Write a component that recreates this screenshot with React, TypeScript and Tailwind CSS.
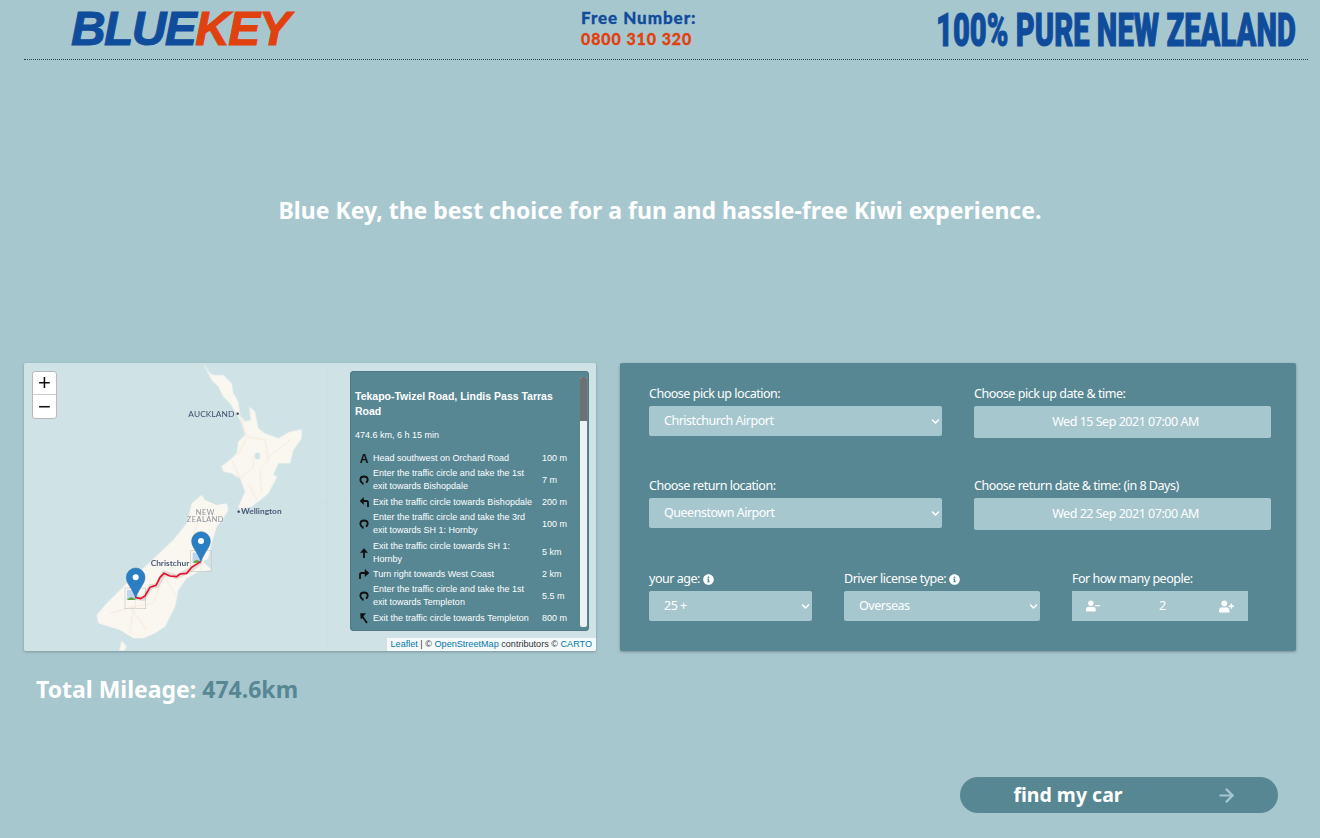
import { ArrowRight } from "lucide-react";
import { FaChevronDown, FaInfoCircle, FaUserMinus, FaUserPlus } from "react-icons/fa";

const ui = "font-['Noto_Sans',sans-serif]";

const steps = [
  { icon: "a", text: "Head southwest on Orchard Road", dist: "100 m" },
  { icon: "round", text: "Enter the traffic circle and take the 1st exit towards Bishopdale", dist: "7 m" },
  { icon: "left", text: "Exit the traffic circle towards Bishopdale", dist: "200 m" },
  { icon: "round", text: "Enter the traffic circle and take the 3rd exit towards SH 1: Hornby", dist: "100 m" },
  { icon: "up", text: "Exit the traffic circle towards SH 1: Hornby", dist: "5 km" },
  { icon: "right", text: "Turn right towards West Coast", dist: "2 km" },
  { icon: "round", text: "Enter the traffic circle and take the 1st exit towards Templeton", dist: "5.5 m" },
  { icon: "sharp", text: "Exit the traffic circle towards Templeton", dist: "800 m" },
];

const StepIcon = ({ type }: { type: string }) => {
  if (type === "a") return <span className="text-[12px] leading-none font-bold text-[#111]">A</span>;
  return (
    <svg width="12" height="12" viewBox="0 0 12 12" fill="none" stroke="#111" strokeWidth="1.8">
      {type === "round" && <path d="M5 10.5 L4.5 9 C1.5 7.5 1.5 2.5 6 2.5 C10.5 2.5 10.5 7 8 8.5" />}
      {type === "left" && (
        <>
          <path d="M10 11 V6.5 C10 5.5 9.5 5 8.5 5 H3" />
          <path d="M5.5 1.5 L2 5 L5.5 8.5 Z" fill="#111" strokeWidth="0.5" />
        </>
      )}
      {type === "up" && (
        <>
          <path d="M6 11 V4" />
          <path d="M2.5 5.5 L6 1.5 L9.5 5.5 Z" fill="#111" strokeWidth="0.5" />
        </>
      )}
      {type === "right" && (
        <>
          <path d="M2 11 V6.5 C2 5.5 2.5 5 3.5 5 H9" />
          <path d="M7 1.5 L11 5 L7 8.5 Z" fill="#111" strokeWidth="0.5" />
        </>
      )}
      {type === "sharp" && (
        <>
          <path d="M9 11 L4 4" />
          <path d="M2.5 1.5 H7.5 L3 7 Z" fill="#111" strokeWidth="0.5" />
        </>
      )}
    </svg>
  );
};

const Pin = ({ x, y }: { x: number; y: number }) => (
  <g transform={`translate(${x} ${y})`}>
    <path d="M0 0 C-10 -30 -28 -42 -28 -62 A28 28 0 0 1 28 -62 C28 -42 10 -30 0 0 Z" fill="#2a7fc4" stroke="#25689f" strokeWidth="1.5" />
    <circle cx="0" cy="-62" r="9" fill="#fff" />
  </g>
);

const BrokenImage = ({ x, y }: { x: number; y: number }) => (
  <g>
    <rect x={x} y={y} width="62" height="62" fill="none" stroke="#c8c8c4" strokeWidth="2" />
    <path d={`M${x + 31} ${y} V${y + 62} M${x} ${y + 31} H${x + 62}`} stroke="#dcdcd8" strokeWidth="1.5" />
    <rect x={x + 6} y={y + 6} width="26" height="30" fill="#bcd4ee" />
    <path d={`M${x + 6} ${y + 36} Q${x + 18} ${y + 20} ${x + 32} ${y + 36} Z`} fill="#58a33c" />
  </g>
);

const MapArt = () => (
  <svg viewBox="12 9 1716 864" className="block h-full w-full">
    <defs>
      <filter id="soft">
        <feGaussianBlur stdDeviation="1.6" />
      </filter>
    </defs>
    <rect x="12" y="9" width="1716" height="864" fill="#cfe3e6" />
    <path d="M348 9 V873 M922 9 V873 M12 430 H1728" stroke="#c8dde0" strokeWidth="1.5" fill="none" />
    <g filter="url(#soft)">
      <g transform="translate(510 0)">
        <path
          d="M40 10 L60 40 L70 45 L100 45 L125 70 L130 100 L145 125 L150 165 L165 185 L182 180 L178 140 L195 155 L205 205 L225 220 L265 235 L300 215 L335 208 L335 235 L310 270 L300 310 L265 310 L250 345 L262 350 L235 400 L205 425 L185 440 L165 445 L150 450 L145 440 L165 395 L150 355 L125 340 L100 335 L95 318 L125 295 L140 280 L145 245 L165 225 L155 190 L145 170 L120 130 L100 110 L85 80 L65 60 Z"
          fill="#faf7f0"
        />
        <path
          d="M150 165 L170 230 L145 285 M170 230 L225 240 L235 300 L210 330 L215 400 M300 240 L230 295 M125 300 L150 355 L190 320 L190 290 M175 370 L200 420"
          stroke="#f4e6cb"
          strokeWidth="2"
          fill="none"
        />
        <ellipse cx="202" cy="288" rx="8" ry="10" fill="#cfe3e6" />
      </g>
      <g transform="translate(210 390)">
        <path
          d="M335 15 L345 30 L380 45 L410 40 L415 60 L400 85 L380 110 L365 160 L355 205 L340 215 L365 240 L325 245 L290 265 L265 300 L255 350 L225 410 L195 430 L160 445 L130 445 L90 420 L25 400 L20 375 L50 340 L100 290 L170 225 L250 150 L290 100 L305 40 Z"
          fill="#faf7f0"
        />
        <path
          d="M210 290 L190 340 L130 350 L120 430 M130 350 L60 370 M230 270 L260 320 M340 60 L310 130 M120 350 L170 420"
          stroke="#f4e6cb"
          strokeWidth="2"
          fill="none"
        />
      </g>
      <path d="M298 872 L305 842 L320 860 L312 872 Z" fill="#faf7f0" />
    </g>
    <circle cx="653" cy="161" r="3.5" fill="#2d3b5a" />
    <text x="505" y="171" fontSize="25" letterSpacing="0.3" fill="#3f4a6b" fontFamily="Lato, sans-serif">AUCKLAND</text>
    <circle cx="656" cy="455" r="3.5" fill="#2d3b5a" />
    <text x="663" y="463" fontSize="25" fontWeight="700" fill="#4a5a78" fontFamily="Lato, sans-serif">Wellington</text>
    <text x="556" y="465" fontSize="22" letterSpacing="1.5" textAnchor="middle" fill="#8a8f9b" fontFamily="Lato, sans-serif">NEW</text>
    <text x="556" y="487" fontSize="22" letterSpacing="1.5" textAnchor="middle" fill="#8a8f9b" fontFamily="Lato, sans-serif">ZEALAND</text>
    <text x="392" y="618" fontSize="25" fontWeight="700" fill="#4a5a78" fontFamily="Lato, sans-serif">Christchur</text>
    <BrokenImage x={512} y={572} />
    <BrokenImage x={315} y={684} />
    <path d="M345 712 L370 716 L392 680 L412 676 L432 640 L470 650 L510 630 L542 605" fill="none" stroke="#8a8a85" strokeOpacity="0.25" strokeWidth="14" />
    <path
      d="M345 712 L362 716 L375 708 L390 682 L408 676 L420 652 L432 640 L450 648 L470 650 L480 642 L500 640 L515 622 L542 605"
      fill="none"
      stroke="#e8102c"
      strokeWidth="5"
    />
    <Pin x={543} y={605} />
    <Pin x={347} y={714} />
  </svg>
);

const RoutePanel = () => (
  <div className="absolute top-2 right-[7px] h-[260px] w-[239px] overflow-hidden rounded-[3px] border border-[#4d7a85] bg-[#578793] font-['Liberation_Sans',sans-serif] text-white">
    <div className="h-full w-[230px] overflow-hidden pt-[17px] pl-[4px]">
      <h2 className="w-[205px] text-[10.5px] leading-[15px] font-bold">Tekapo-Twizel Road, Lindis Pass Tarras Road</h2>
      <p className="mt-[10px] text-[9px] leading-[12px]">474.6 km, 6 h 15 min</p>
      <div className="mt-[11px] flex flex-col gap-[2.4px]">
        {steps.map((s) => (
          <div key={s.text} className="flex items-center text-[9px] leading-[13px]">
            <span className="flex w-[18px] shrink-0 justify-center">
              <StepIcon type={s.icon} />
            </span>
            <span className="mr-[5px] w-[164px] shrink-0">{s.text}</span>
            <span>{s.dist}</span>
          </div>
        ))}
      </div>
    </div>
    <div className="absolute top-[5px] right-[1px] h-[250px] w-[7px] rounded-[2px] bg-[#eef1f1]">
      <div className="h-[44px] w-full rounded-t-[2px] bg-[#6f7073]" />
    </div>
  </div>
);

const Field = ({ label, info, children }: { label: string; info?: boolean; children: React.ReactNode }) => (
  <div>
    <div className="flex h-[23px] items-center gap-[3px] text-[12.5px] tracking-[-0.48px] text-white">
      {label}
      {info && <FaInfoCircle size={11} className="text-white" />}
    </div>
    {children}
  </div>
);

const Select = ({ value, width }: { value: string; width: string }) => (
  <div className={`relative h-[30px] ${width}`}>
    <select
      defaultValue={value}
      className="h-full w-full appearance-none rounded-[2px] bg-[#a7c7cf] pl-[15px] text-[12.5px] tracking-[-0.48px] text-white outline-none"
    >
      <option>{value}</option>
    </select>
    <FaChevronDown size={9} className="pointer-events-none absolute top-[11px] right-[2px] text-white" />
  </div>
);

const DateBox = ({ value }: { value: string }) => (
  <div className="flex h-[32px] w-[297px] items-center justify-center rounded-[2px] bg-[#a7c7cf] pl-[6px] text-[12.5px] tracking-[-0.48px] text-white">
    {value}
  </div>
);

export default function App() {
  return (
    <div className={`h-[838px] overflow-hidden bg-[#a7c7cf] ${ui}`}>
      <header className="mr-3 ml-6 flex h-[60px] items-center border-b border-dotted border-[#23424b] pr-3 pl-[47px]">
        <div className="w-[223px] -translate-y-[1px] font-['Liberation_Sans',sans-serif] text-[48px] leading-none font-bold tracking-[-1.6px] whitespace-nowrap italic [-webkit-text-stroke:1px_currentColor]">
          <span className="text-[#0f4c9b]">BLUE</span>
          <span className="text-[#e0410f]">KEY</span>
        </div>
        <div className="ml-[287px] -translate-y-[2px] font-['Lato',sans-serif] leading-[21px] font-black [-webkit-text-stroke:0.3px_currentColor]">
          <p className="text-[17px] tracking-[0.95px] text-[#0f4c9b]">Free Number:</p>
          <p className="text-[16px] tracking-[0.9px] text-[#e0410f]">0800 310 320</p>
        </div>
        <div className="ml-auto w-[360px]">
          <div className="origin-left scale-x-[0.635] font-['Roboto',sans-serif] text-[46px] leading-none font-black whitespace-nowrap text-[#0f4c9b] [-webkit-text-stroke:1px_#0f4c9b]">
            100% PURE NEW ZEALAND
          </div>
        </div>
      </header>

      <h1 className="mt-[134px] text-center text-[23px] leading-8 font-bold text-white">
        Blue Key, the best choice for a fun and hassle-free Kiwi experience.
      </h1>

      <section className="mt-[137px] flex gap-6 pl-6">
        <div className="w-[572px]">
          <div className="relative h-[288px] overflow-hidden rounded-[2px] shadow-[0_1px_3px_rgba(0,0,0,0.25)]">
            <MapArt />
            <div className="absolute top-2 left-2 flex w-[25px] flex-col overflow-hidden rounded-[3px] border border-[#b9b9b9] bg-white font-['Liberation_Sans',sans-serif] text-[#111]">
              <span className="flex h-[23px] items-center justify-center border-b border-[#ccc] text-[22px] leading-none">+</span>
              <span className="flex h-[23px] items-center justify-center text-[22px] leading-none">−</span>
            </div>
            <RoutePanel />
            <div className="absolute right-0 bottom-0 bg-white/80 px-[4px] font-['Liberation_Sans',sans-serif] text-[9.1px] leading-[13px] text-[#333]">
              <span className="text-[#0078a8]">Leaflet</span> | © <span className="text-[#0078a8]">OpenStreetMap</span> contributors © <span className="text-[#0078a8]">CARTO</span>
            </div>
          </div>
          <p className="mt-[22px] pl-3 text-[23px] leading-8 font-bold text-white">
            Total Mileage: <span className="text-[#578793]">474.6km</span>
          </p>
        </div>

        <form className="h-[288px] w-[676px] rounded-[2px] bg-[#578793] pt-5 pl-[29px] shadow-[0_1px_3px_rgba(0,0,0,0.3)]">
          <div className="flex gap-8">
            <Field label="Choose pick up location:"><Select value="Christchurch Airport" width="w-[293px]" /></Field>
            <Field label="Choose pick up date & time:"><DateBox value="Wed 15 Sep 2021 07:00 AM" /></Field>
          </div>
          <div className="mt-[37px] flex gap-8">
            <Field label="Choose return location:"><Select value="Queenstown Airport" width="w-[293px]" /></Field>
            <Field label="Choose return date & time: (in 8 Days)"><DateBox value="Wed 22 Sep 2021 07:00 AM" /></Field>
          </div>
          <div className="mt-[38px] flex gap-8">
            <Field label="your age:" info><Select value="25 +" width="w-[163px]" /></Field>
            <Field label="Driver license type:" info><Select value="Overseas" width="w-[196px]" /></Field>
            <Field label="For how many people:">
              <div className="flex h-[30px] w-[176px] items-center justify-between bg-[#a7c7cf] px-[14px] text-[12.5px] text-white">
                <FaUserMinus size={14} />
                <span className="pl-[6px]">2</span>
                <FaUserPlus size={15} />
              </div>
            </Field>
          </div>
        </form>
      </section>

      <div className="mt-[72px] flex justify-end pr-[42px]">
        <button className="relative h-[36px] w-[318px] rounded-full bg-[#578793] pr-[102px] text-[19.5px] leading-[36px] font-bold text-white">
          find my car
          <ArrowRight size={21} strokeWidth={2.5} className="absolute top-2 right-[41px] text-[#a7c7cf]" />
        </button>
      </div>
    </div>
  );
}
